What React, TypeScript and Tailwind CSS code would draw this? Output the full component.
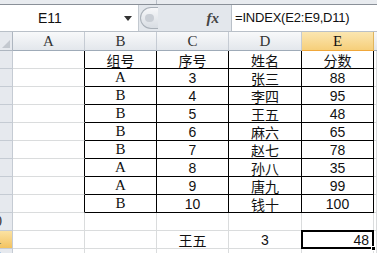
import React from 'react'

const cols = ['A', 'B', 'C', 'D', 'E']

const table = [
  ['组号', '序号', '姓名', '分数'],
  ['A', '3', '张三', '88'],
  ['B', '4', '李四', '95'],
  ['B', '5', '王五', '48'],
  ['B', '6', '麻六', '65'],
  ['B', '7', '赵七', '78'],
  ['A', '8', '孙八', '35'],
  ['A', '9', '唐九', '99'],
  ['B', '10', '钱十', '100'],
]

const serif = "font-['Liberation_Serif','Noto_Sans_CJK_SC',serif]"
const sans = "font-['Liberation_Sans',Arial,sans-serif]"
const cjk = "font-['Noto_Sans_CJK_SC',sans-serif]"

function RowHead({ n, active }: { n: number; active?: boolean }) {
  // only the right edge of the row header is in view
  return (
    <div
      className={
        'h-[18px] overflow-hidden border-r border-b border-[#c5cbd3] ' +
        (active ? 'bg-gradient-to-b from-[#fbe2a2] to-[#f3c35f]' : 'bg-[#e6e9ee]')
      }
    >
      <div className={`-ml-[20px] flex h-full w-[30px] items-center justify-center text-[14px] text-[#333] ${serif}`}>
        {n}
      </div>
    </div>
  )
}

function Cell({ children, black, blackRight, className = '' }: { children?: React.ReactNode; black?: boolean; blackRight?: boolean; className?: string }) {
  const r = black || blackRight ? 'border-r-black' : 'border-r-[#dadcdd]'
  const b = black ? 'border-b-black' : 'border-b-[#dadcdd]'
  return (
    <div className={`flex h-[18px] items-center border-r border-b ${r} ${b} ${className}`}>{children}</div>
  )
}

function cellFont(col: number, row: number) {
  if (row === 0 || col === 2) return `${cjk} text-[14px] leading-none`
  if (col === 0) return `${serif} text-[15px] leading-none`
  return `${sans} text-[14px] leading-none`
}

export default function App() {
  return (
    <div className="h-[253px] w-[377px] overflow-hidden bg-white text-[#111]">
      {/* ribbon remnant */}
      <div className="flex h-[5px] border-b border-[#8a9098] bg-[#e8ebef]">
        <div className="w-[157px] border-r border-[#b8bec6]" />
      </div>

      {/* formula bar */}
      <div className="flex h-[27px] border-b border-[#b9c0c8] bg-[#e3e7ec]">
        <div className="flex w-[139px] items-center border-r border-[#c3c9d0] bg-white">
          <span className={`ml-[38px] text-[14px] ${sans}`}>E11</span>
          <svg width="8" height="5" viewBox="0 0 8 5" className="ml-auto mr-[6px]">
            <path d="M0 0 L8 0 L4 5 Z" fill="#333" />
          </svg>
        </div>
        <div className="flex flex-1 items-center pl-[1px]">
          <div className="h-[22px] w-[18px] rounded-l-full border border-r-0 border-[#a9b0b8] bg-gradient-to-b from-[#f6f7f9] to-[#d8dde3] pl-[4px] pt-[6px]">
            <div className="h-[8px] w-[9px] rounded-full bg-[#c9ced5]" />
          </div>
          <span className="ml-auto mr-[12px] font-['Liberation_Serif',serif] text-[15px] font-bold italic text-[#444]">fx</span>
        </div>
        <div className="flex w-[146px] items-center border-l border-[#b9c0c8] bg-white pl-[3px]">
          <span className={`text-[13px] tracking-[-0.2px] ${sans}`}>=INDEX(E2:E9,D11)</span>
        </div>
      </div>

      <div className="grid grid-cols-[13px_72px_72px_72px_73px_72px_1fr]">
        {/* column headers */}
        <div className="flex h-[19px] items-end justify-end border-r border-b border-[#aeb6c0] bg-[#e6e9ee] p-[2px]">
          <div className="h-0 w-0 border-b-[8px] border-l-[8px] border-b-[#c3c8cf] border-l-transparent" />
        </div>
        {cols.map((c) => (
          <div
            key={c}
            className={
              `flex h-[19px] items-center justify-center border-r border-b text-[15px] ${serif} ` +
              (c === 'E'
                ? 'border-r-[#e0b45c] border-b-[#f0a73a] bg-gradient-to-b from-[#fbe6b0] to-[#f6cf7a]'
                : 'border-r-[#c5cbd3] border-b-[#9fabb8] bg-gradient-to-b from-[#f8f9fa] to-[#e3e7ec] text-[#333]')
            }
          >
            {c}
          </div>
        ))}
        <div className="h-[19px] border-b border-[#9fabb8] bg-gradient-to-b from-[#f8f9fa] to-[#e3e7ec]" />

        {/* table rows 1-9 */}
        {table.map((row, ri) => (
          <React.Fragment key={ri}>
            <RowHead n={ri + 1} />
            <Cell blackRight />
            {row.map((v, ci) => (
              <Cell key={ci} black className={`justify-center ${cellFont(ci, ri)}`}>
                {v}
              </Cell>
            ))}
            <Cell />
          </React.Fragment>
        ))}

        {/* row 10 */}
        <RowHead n={10} />
        <Cell />
        <Cell />
        <Cell />
        <Cell />
        <Cell />
        <Cell />

        {/* row 11 */}
        <RowHead n={11} active />
        <Cell />
        <Cell />
        <Cell className={`justify-center ${cjk} text-[14px] leading-none`}>王五</Cell>
        <Cell className={`justify-center ${sans} text-[14px] leading-none`}>3</Cell>
        <div className="relative flex h-[18px] items-center justify-end border-r border-b border-[#dadcdd] pr-[4px]">
          <span className={`${sans} text-[14px] leading-none`}>48</span>
          <div className="absolute -top-[1px] -left-[1px] -right-[1px] -bottom-[1px] border-2 border-black" />
          <div className="absolute -bottom-[3px] -right-[3px] h-[5px] w-[5px] border border-white bg-black" />
        </div>
        <Cell />

        {/* row 12 */}
        <RowHead n={12} />
        <Cell />
        <Cell />
        <Cell />
        <Cell />
        <Cell />
        <Cell />
      </div>
    </div>
  )
}
